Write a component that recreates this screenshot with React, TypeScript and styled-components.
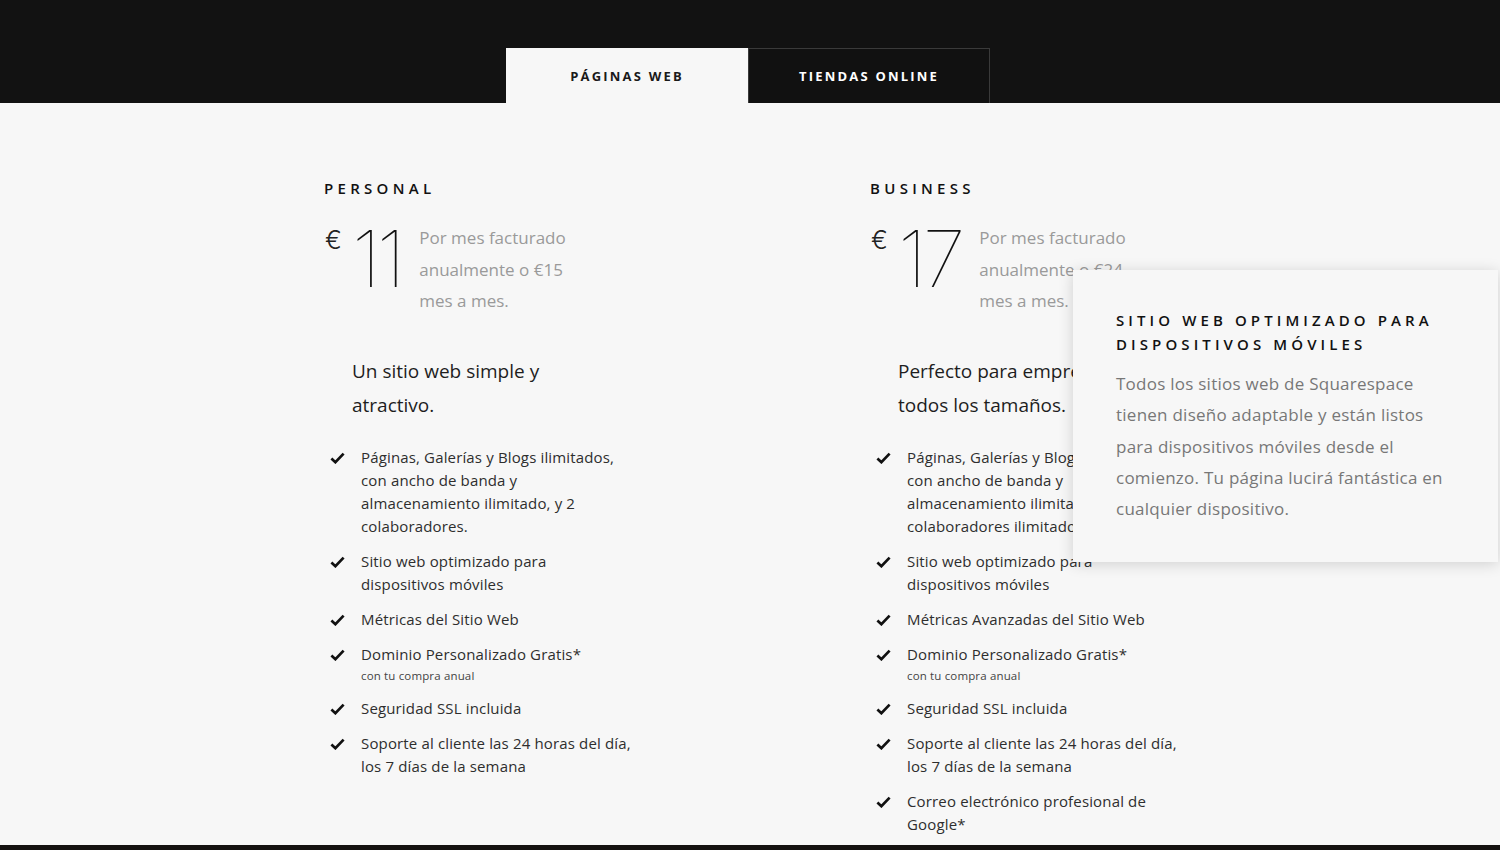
import React from "react";
import styled, { createGlobalStyle } from "styled-components";

const Global = createGlobalStyle`
  html, body { margin: 0; padding: 0; background: #111; }
  body { font-family: "Open Sans", "Liberation Sans", sans-serif; -webkit-font-smoothing: antialiased; }
  * { box-sizing: border-box; }
`;

const Page = styled.div`
  width: 1500px;
  height: 850px;
  overflow: hidden;
  display: flex;
  flex-direction: column;
  position: relative;
  background: #111;
`;

const TopBand = styled.div`
  height: 103px;
  background: #121212;
  display: flex;
  justify-content: center;
  align-items: flex-end;
  padding-right: 4px;
`;

const Tab = styled.div<{ $active?: boolean }>`
  width: 242px;
  height: 55px;
  display: flex;
  align-items: center;
  justify-content: center;
  font-size: 13px;
  font-weight: 700;
  letter-spacing: 2.2px;
  color: ${(p) => (p.$active ? "#1a1a1a" : "#ffffff")};
  background: ${(p) => (p.$active ? "#f7f7f7" : "#111111")};
  border: ${(p) => (p.$active ? "none" : "1px solid #3a3a3a")};
  border-bottom: none;
`;

const Content = styled.div`
  height: 742px;
  background: #f7f7f7;
  display: grid;
  grid-template-columns: repeat(2, 306px);
  column-gap: 240px;
  justify-content: center;
  padding-top: 75px;
`;

const Plan = styled.div`
  display: flex;
  flex-direction: column;
`;

const PlanTitle = styled.h2`
  margin: 0;
  font-size: 15px;
  font-weight: 600;
  letter-spacing: 4.3px;
  color: #111;
  line-height: 20px;
`;

const PriceRow = styled.div`
  display: flex;
  margin-top: 22px;
`;

const Currency = styled.span`
  font-family: "Inter", "Open Sans", sans-serif;
  font-size: 25px;
  font-weight: 300;
  color: #222;
  line-height: 1;
  margin-top: 8px;
  width: 28px;
  padding-left: 1px;
`;

const Amount = styled.span`
  font-family: "Inter", "Lato", sans-serif;
  font-size: 78px;
  font-weight: 100;
  color: #111;
  line-height: 1;
  margin-top: 0;
  letter-spacing: -4px;
  margin-right: 18px;
`;

const PriceNote = styled.p`
  margin: 0;
  width: 175px;
  font-size: 17px;
  line-height: 31.5px;
  color: #9a9a9a;
  margin-top: 2px;
`;

const Tagline = styled.p`
  margin: 37px 0 0 28px;
  font-size: 19px;
  line-height: 34px;
  color: #1e1e1e;
`;

const Features = styled.ul`
  list-style: none;
  margin: 24px 0 0 6px;
  padding: 0;
  display: flex;
  flex-direction: column;
  gap: 12px;
`;

const Feature = styled.li`
  display: flex;
  gap: 16px;
  font-size: 15px;
  letter-spacing: 0.15px;
  line-height: 23px;
  color: #2e2e2e;
`;

const CheckBox = styled.span`
  flex: 0 0 15px;
  padding-top: 6px;
  display: flex;
`;

const FeatureText = styled.div`
  white-space: nowrap;
`;

const SubNote = styled.div`
  font-size: 11.5px;
  line-height: 19px;
  color: #444;
`;

const Tooltip = styled.div`
  position: absolute;
  left: 1073px;
  top: 270px;
  width: 425px;
  height: 292px;
  background: #f7f7f7;
  box-shadow: 0 2px 14px rgba(0, 0, 0, 0.16);
  padding: 38px 30px 0 43px;
`;

const TooltipTitle = styled.h3`
  margin: 0;
  font-size: 15px;
  font-weight: 600;
  letter-spacing: 4.1px;
  line-height: 24px;
  color: #111;
`;

const TooltipBody = styled.p`
  margin: 12px 0 0;
  font-size: 17px;
  letter-spacing: 0.25px;
  line-height: 31.3px;
  color: #777;
  white-space: nowrap;
`;

const Footer = styled.div`
  height: 5px;
  background: #151210;
`;

const Check = () => (
  <svg width="15" height="12" viewBox="0 0 15 12">
    <path d="M1.4 6.4 L5.4 10.2 L13.6 1.6" fill="none" stroke="#111" strokeWidth="2.7" strokeLinejoin="miter" />
  </svg>
);

type Item = { lines: string[]; sub?: string };

const personal: Item[] = [
  { lines: ["Páginas, Galerías y Blogs ilimitados,", "con ancho de banda y", "almacenamiento ilimitado, y 2", "colaboradores."] },
  { lines: ["Sitio web optimizado para", "dispositivos móviles"] },
  { lines: ["Métricas del Sitio Web"] },
  { lines: ["Dominio Personalizado Gratis*"], sub: "con tu compra anual" },
  { lines: ["Seguridad SSL incluida"] },
  { lines: ["Soporte al cliente las 24 horas del día,", "los 7 días de la semana"] },
];

const business: Item[] = [
  { lines: ["Páginas, Galerías y Blogs ilimitados,", "con ancho de banda y", "almacenamiento ilimitado, y", "colaboradores ilimitados."] },
  { lines: ["Sitio web optimizado para", "dispositivos móviles"] },
  { lines: ["Métricas Avanzadas del Sitio Web"] },
  { lines: ["Dominio Personalizado Gratis*"], sub: "con tu compra anual" },
  { lines: ["Seguridad SSL incluida"] },
  { lines: ["Soporte al cliente las 24 horas del día,", "los 7 días de la semana"] },
  { lines: ["Correo electrónico profesional de", "Google*"] },
];

const Lines = ({ lines }: { lines: string[] }) => (
  <>
    {lines.map((l, i) => (
      <React.Fragment key={i}>
        {i > 0 && <br />}
        {l}
      </React.Fragment>
    ))}
  </>
);

const PlanCard = ({
  title,
  price,
  note,
  tagline,
  items,
}: {
  title: string;
  price: string;
  note: string;
  tagline: string[];
  items: Item[];
}) => (
  <Plan>
    <PlanTitle>{title}</PlanTitle>
    <PriceRow>
      <Currency>€</Currency>
      <Amount>{price}</Amount>
      <PriceNote>{note}</PriceNote>
    </PriceRow>
    <Tagline>
      <Lines lines={tagline} />
    </Tagline>
    <Features>
      {items.map((it, i) => (
        <Feature key={i}>
          <CheckBox>
            <Check />
          </CheckBox>
          <FeatureText>
            <Lines lines={it.lines} />
            {it.sub && <SubNote>{it.sub}</SubNote>}
          </FeatureText>
        </Feature>
      ))}
    </Features>
  </Plan>
);

export default function App() {
  return (
    <Page>
      <Global />
      <TopBand>
        <Tab $active>PÁGINAS WEB</Tab>
        <Tab>TIENDAS ONLINE</Tab>
      </TopBand>
      <Content>
        <PlanCard
          title="PERSONAL"
          price="11"
          note="Por mes facturado anualmente o €15 mes a mes."
          tagline={["Un sitio web simple y", "atractivo."]}
          items={personal}
        />
        <PlanCard
          title="BUSINESS"
          price="17"
          note="Por mes facturado anualmente o €24 mes a mes."
          tagline={["Perfecto para empresas de", "todos los tamaños."]}
          items={business}
        />
      </Content>
      <Footer />
      <Tooltip>
        <TooltipTitle>
          SITIO WEB OPTIMIZADO PARA
          <br />
          DISPOSITIVOS MÓVILES
        </TooltipTitle>
        <TooltipBody>
          <Lines
            lines={[
              "Todos los sitios web de Squarespace",
              "tienen diseño adaptable y están listos",
              "para dispositivos móviles desde el",
              "comienzo. Tu página lucirá fantástica en",
              "cualquier dispositivo.",
            ]}
          />
        </TooltipBody>
      </Tooltip>
    </Page>
  );
}
